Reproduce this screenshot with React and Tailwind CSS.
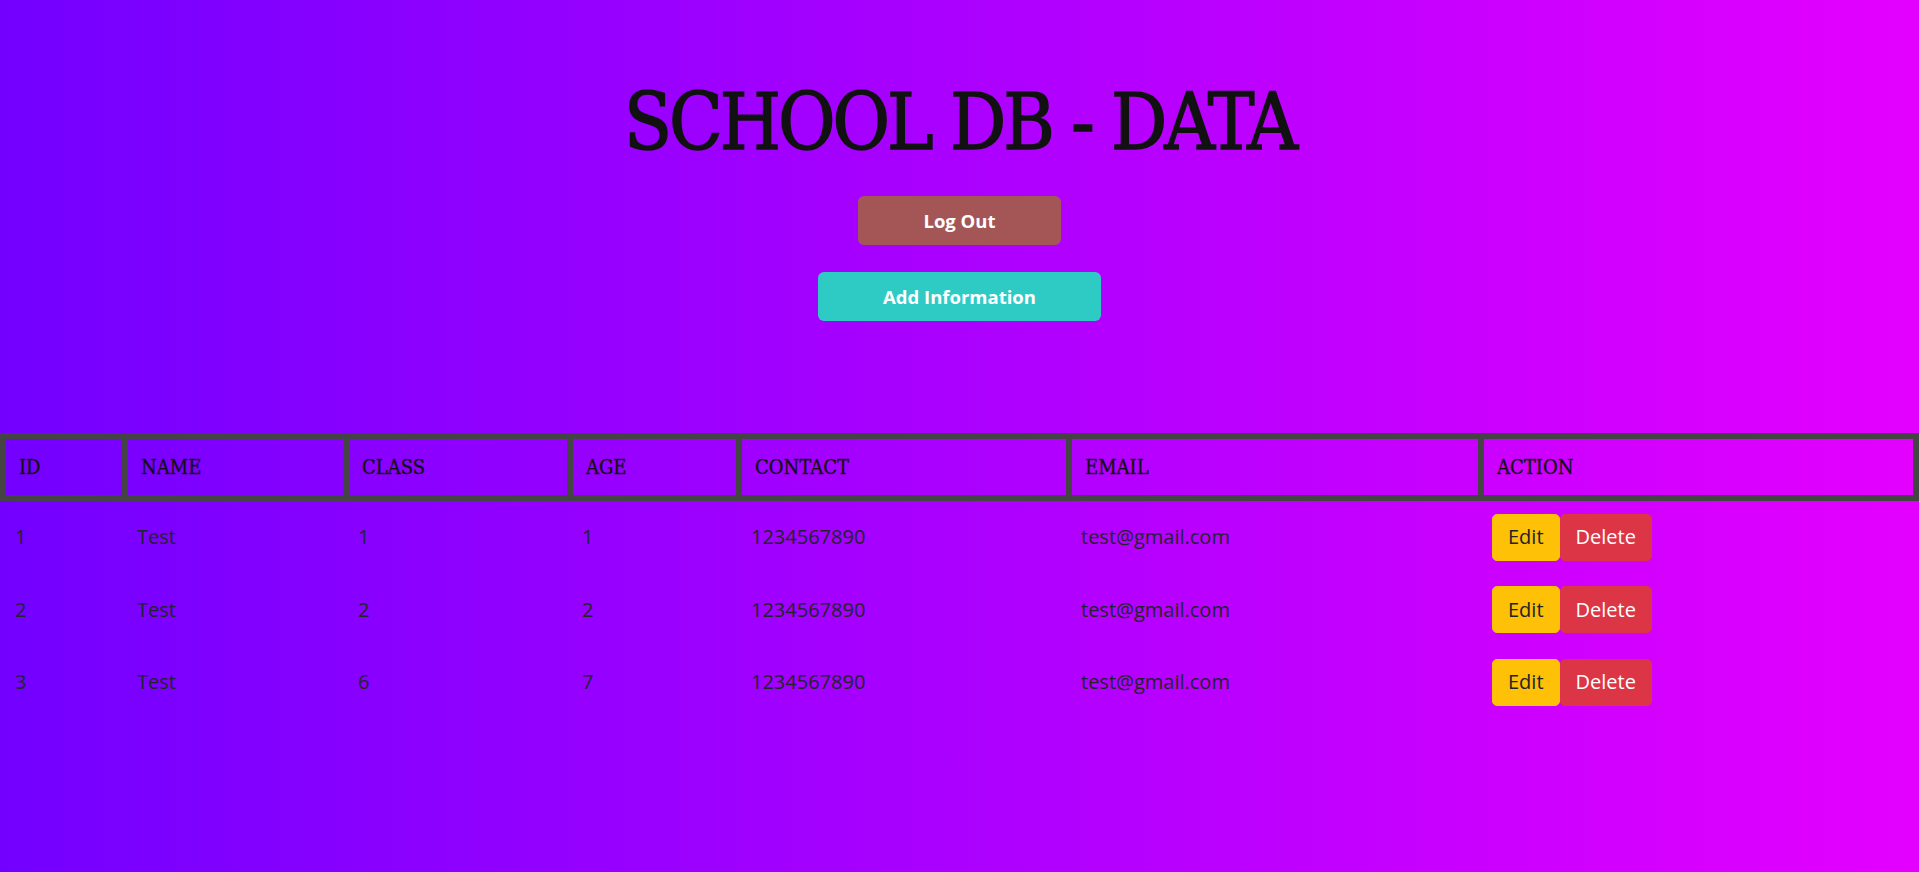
import React from "react";

const students = [
  { id: 1, name: "Test", cls: 1, age: 1, contact: "1234567890", email: "test@gmail.com" },
  { id: 2, name: "Test", cls: 2, age: 2, contact: "1234567890", email: "test@gmail.com" },
  { id: 3, name: "Test", cls: 6, age: 7, contact: "1234567890", email: "test@gmail.com" },
];

const headers = ["ID", "NAME", "CLASS", "AGE", "CONTACT", "EMAIL", "ACTION"];

// same column template for header and body rows
const cols = "grid grid-cols-[122px_221px_224px_169px_330px_412px_1fr]";

const App = () => {
  return (
    <div className="min-h-screen bg-linear-to-r/srgb from-[#7300ff] to-[#e400ff] text-[#212529] font-['Open_Sans','Noto_Sans',sans-serif]">
      <div className="flex flex-col items-center">
        <h1 className="mt-[83px] text-[78px] leading-[78px] text-[#111] tracking-[-3px] [-webkit-text-stroke:1.5px_#111] font-['DejaVu_Serif_Condensed','DejaVu_Serif',serif]">
          SCHOOL DB - DATA
        </h1>
        <button className="mt-[35px] h-[49px] px-[65px] rounded-[6px] bg-[#a45656] text-white font-bold text-[18.5px]">
          Log Out
        </button>
        <button className="mt-[27px] h-[49px] px-[65px] rounded-[6px] bg-[#2ecbc5] text-white font-bold text-[18.5px]">
          Add Information
        </button>
      </div>

      {/* Table */}
      <div className="mt-[112px]">
        <div className={cols + " text-[20px] text-[#111] [-webkit-text-stroke:0.3px_#111] font-['DejaVu_Serif_Condensed','DejaVu_Serif',serif]"}>
          {headers.map((h, i) => (
            <div
              key={h}
              className={
                i === headers.length - 1
                  ? "border-y-[6px] border-x-[6px] border-[#444] px-[13px] leading-[56px]"
                  : "border-y-[6px] border-l-[6px] border-[#444] px-[13px] leading-[56px]"
              }
            >
              {h}
            </div>
          ))}
        </div>
        {students.map((s) => (
          <div key={s.id} className={cols + " h-[72.5px] items-center text-[20px] leading-[30px]"}>
            <div className="pl-[15px]">{s.id}</div>
            <div className="pl-[15px]">{s.name}</div>
            <div className="pl-[15px]">{s.cls}</div>
            <div className="pl-[15px]">{s.age}</div>
            <div className="pl-[15px]">{s.contact}</div>
            <div className="pl-[15px]">{s.email}</div>
            <div className="pl-[14px] flex">
              <button className="bg-[#ffc107] border-[1.25px] border-[#ffc107] rounded-[5px] px-[15px] py-[7.5px] leading-[30px] text-[#212529]">
                Edit
              </button>
              <button className="bg-[#dc3545] border-[1.25px] border-[#dc3545] rounded-[5px] px-[15px] py-[7.5px] leading-[30px] text-white">
                Delete
              </button>
            </div>
          </div>
        ))}
      </div>
    </div>
  );
};

export default App;
